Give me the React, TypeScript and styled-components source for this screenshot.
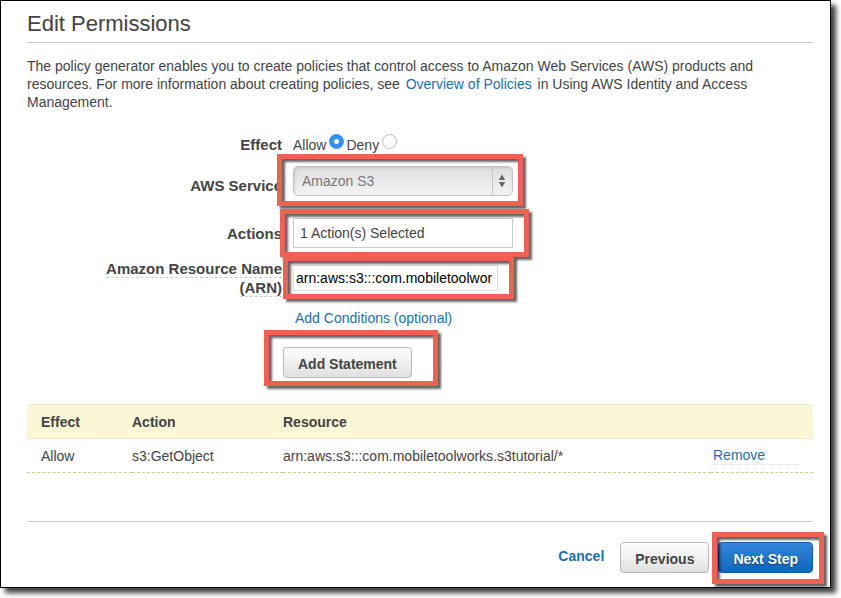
import React, { useState } from "react";
import styled, { createGlobalStyle, css } from "styled-components";

const GlobalStyle = createGlobalStyle`
  *, *::before, *::after { box-sizing: border-box; }
  body {
    margin: 0;
    background: #fff;
    color: #444;
    font: 14px/18px "Liberation Sans", Arial, sans-serif;
  }
  button, input, select { font: inherit; color: inherit; margin: 0; }
`;

const Page = styled.div`
  padding: 0 10px 10px 0;
  overflow: hidden;
`;

const Panel = styled.main`
  padding: 9px 17px 14px 26px;
  border: 1px solid #000;
  background: #fff;
  box-shadow: 5px 5px 5px rgba(0, 0, 0, 0.75);
`;

const Title = styled.h1`
  margin: 0 0 14px;
  padding-bottom: 4px;
  border-bottom: 1px solid #ccc;
  font-size: 22px;
  line-height: 28px;
  font-weight: 400;
`;

const Intro = styled.p`
  margin: 0;
  max-width: 750px;
`;

const Link = styled.a`
  color: #1a6fb8;
  text-decoration: none;
`;

const IntroLink = styled(Link)`
  margin: 0 2px;
`;

const Form = styled.form`
  display: grid;
  grid-template-columns: 255px 1fr;
  column-gap: 11px;
  margin-top: 23px;
`;

const labelText = css`
  font-size: 15px;
  line-height: 19px;
  font-weight: 700;
  text-align: right;
  align-self: center;
`;

const GroupLabel = styled.span`
  ${labelText}
`;

const Label = styled.label<{ $drop?: boolean }>`
  ${labelText}
  padding-top: ${(p) => (p.$drop ? 8 : 0)}px;
`;

const Hint = styled.span`
  border-bottom: 1px dashed #ccc;
`;

const Field = styled.div<{ $height: number }>`
  grid-column: 2;
  display: flex;
  align-items: center;
  min-height: ${(p) => p.$height}px;
`;

const RadioLabel = styled.label`
  display: inline-flex;
  align-items: center;
  gap: 3px;
  margin-right: 2px;
`;

const Radio = styled.input`
  appearance: none;
  width: 15px;
  height: 15px;
  margin-bottom: 6px;
  border: 1px solid #bbb;
  border-radius: 50%;
  background: #fff;
  &:checked {
    border-color: #2c8cf8;
    background: radial-gradient(circle, #fff 2px, #2f90fb 3px);
  }
`;

const Highlight = styled.div<{ $inset: string }>`
  position: relative;
  display: flex;
  &::after {
    content: "";
    position: absolute;
    inset: ${(p) => p.$inset};
    border: 5px solid #f16153;
    filter: drop-shadow(3px 3px 1px rgba(0, 0, 0, 0.6));
    pointer-events: none;
  }
`;

const Select = styled.select`
  appearance: none;
  width: 220px;
  height: 30px;
  padding: 0 8px;
  border: 1px solid #c4c4c4;
  border-radius: 5px;
  background: linear-gradient(#dedede, #f4f4f4);
  box-shadow: inset 1px 1px 3px rgba(0, 0, 0, 0.12);
  color: #777;
`;

const Arrows = styled.svg`
  position: absolute;
  top: 1px;
  right: 1px;
  width: 20px;
  height: 28px;
  pointer-events: none;
`;

const ActionsInput = styled.input`
  width: 220px;
  height: 30px;
  padding: 0 6px;
  border: 1px solid #ccc;
  background: #fff;
`;

const ArnInput = styled.input`
  width: 205px;
  height: 26px;
  padding: 0 5px 0 2px;
  border: 1px solid #ddd;
  background: #fff;
  color: #000;
`;

const ConditionsLink = styled(Link)`
  margin: 10px 0 0 2px;
`;

const AddRow = styled.div`
  display: flex;
  margin: 18px 0 0 256px;
`;

const Button = styled.button<{ $primary?: boolean }>`
  height: 31px;
  padding: 2px 14px 0;
  border: 1px solid ${(p) => (p.$primary ? "#0f5cae" : "#b8b8b8")};
  border-radius: 4px;
  background: ${(p) => (p.$primary ? "linear-gradient(#2f86dc, #1166bb)" : "linear-gradient(#fff, #e0e0e0)")};
  color: ${(p) => (p.$primary ? "#fff" : "#444")};
  text-shadow: ${(p) => (p.$primary ? "0 1px 2px rgba(0, 0, 0, 0.5)" : "none")};
  font-weight: 700;
  white-space: nowrap;
`;

const Statements = styled.table`
  width: 100%;
  margin-top: 26px;
  border-collapse: collapse;
  table-layout: fixed;
  th, td {
    height: 34px;
    padding: 0;
    text-align: left;
  }
  th {
    border: solid #f0ebc4;
    border-width: 1px 0;
    background: #faf6d6;
  }
  td { border-bottom: 1px dashed #cbcf88; }
  th:first-child, td:first-child { padding-left: 14px; }
`;

const Col = styled.col<{ $width?: number }>`
  width: ${(p) => (p.$width ? `${p.$width}px` : "auto")};
`;

const RemoveLink = styled(Link)`
  display: block;
  width: 88px;
  padding-left: 2px;
  border-bottom: 1px dotted #ddd;
`;

const Footer = styled.footer`
  display: flex;
  justify-content: flex-end;
  align-items: center;
  margin-top: 48px;
  padding-top: 20px;
  border-top: 1px solid #ccc;
`;

const CancelLink = styled(Link)`
  margin: 0 16px 4px 0;
  font-weight: 700;
`;

const NextSlot = styled(Highlight)`
  margin-left: 9px;
`;

const statements = [
  { effect: "Allow", action: "s3:GetObject", resource: "arn:aws:s3:::com.mobiletoolworks.s3tutorial/*" },
];

export default function App() {
  const [effect, setEffect] = useState("Allow");
  const [arn, setArn] = useState("arn:aws:s3:::com.mobiletoolworks.s3tutorial/*");

  return (
    <Page>
      <GlobalStyle />
      <Panel>
        <Title>Edit Permissions</Title>
        <Intro>
          The policy generator enables you to create policies that control access to Amazon Web Services (AWS) products and
          resources. For more information about creating policies, see{" "}
          <IntroLink href="#policies">Overview of Policies</IntroLink> in Using AWS Identity and Access Management.
        </Intro>

        <Form id="statement" onSubmit={(e) => e.preventDefault()}>
          <GroupLabel id="effect">Effect</GroupLabel>
          <Field $height={19} role="radiogroup" aria-labelledby="effect">
            {["Allow", "Deny"].map((name) => (
              <RadioLabel key={name}>
                {name}
                <Radio type="radio" name="effect" checked={effect === name} onChange={() => setEffect(name)} />
              </RadioLabel>
            ))}
          </Field>

          <Label htmlFor="service" $drop>AWS Service</Label>
          <Field $height={52}>
            <Highlight $inset="-12px -10px -10px -16px">
              <Select id="service" defaultValue="s3">
                <option value="s3">Amazon S3</option>
              </Select>
              <Arrows viewBox="0 0 20 28" aria-hidden="true">
                <path d="M0.5 0V28" stroke="#c4c4c4" />
                <path d="M10 7.5L13.2 13H6.8ZM10 20.5L13.2 15H6.8Z" fill="#666" />
              </Arrows>
            </Highlight>
          </Field>

          <Label htmlFor="actions">Actions</Label>
          <Field $height={52}>
            <Highlight $inset="-9px -16px -9px -13px">
              <ActionsInput id="actions" readOnly value="1 Action(s) Selected" />
            </Highlight>
          </Field>

          <Label htmlFor="arn">
            <Hint>
              Amazon Resource Name
              <br />
              (ARN)
            </Hint>
          </Label>
          <Field $height={38}>
            <Highlight $inset="-9px -16px -8px -10px">
              <ArnInput id="arn" value={arn} onChange={(e) => setArn(e.target.value)} />
            </Highlight>
          </Field>

          <Field $height={32}>
            <ConditionsLink href="#conditions">Add Conditions (optional)</ConditionsLink>
          </Field>
        </Form>

        <AddRow>
          <Highlight $inset="-17px -26px -8px -19px">
            <Button type="submit" form="statement">Add Statement</Button>
          </Highlight>
        </AddRow>

        <Statements>
          <colgroup>
            <Col $width={105} />
            <Col $width={151} />
            <Col />
            <Col $width={102} />
          </colgroup>
          <thead>
            <tr>
              <th scope="col">Effect</th>
              <th scope="col">Action</th>
              <th scope="col">Resource</th>
              <th aria-label="Remove" />
            </tr>
          </thead>
          <tbody>
            {statements.map((s) => (
              <tr key={s.resource}>
                <td>{s.effect}</td>
                <td>{s.action}</td>
                <td>{s.resource}</td>
                <td>
                  <RemoveLink href="#remove">Remove</RemoveLink>
                </td>
              </tr>
            ))}
          </tbody>
        </Statements>

        <Footer>
          <CancelLink href="#cancel">Cancel</CancelLink>
          <Button type="button">Previous</Button>
          <NextSlot $inset="-10px -11px -11px -6px">
            <Button type="button" $primary>Next Step</Button>
          </NextSlot>
        </Footer>
      </Panel>
    </Page>
  );
}
